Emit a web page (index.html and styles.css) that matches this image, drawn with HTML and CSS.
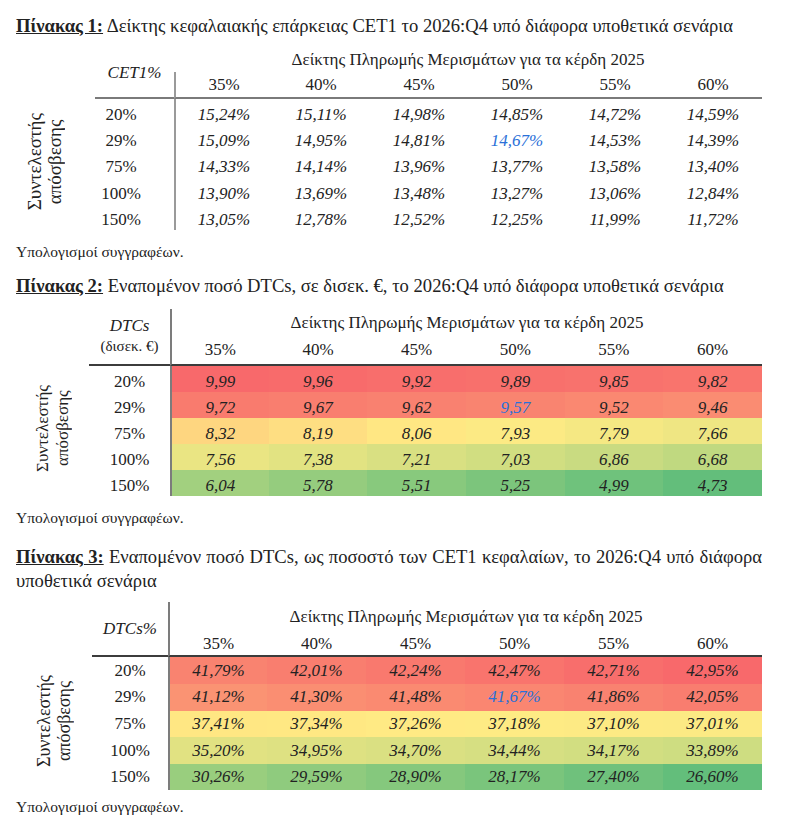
FILE: index.html
```html
<!DOCTYPE html>
<html lang="el">
<head>
<meta charset="utf-8">
<title>Πίνακες DTCs</title>
<link rel="stylesheet" href="styles.css">
</head>
<body>
<section class="block b1">
  <p class="caption"><span class="lbl">Πίνακας 1:</span> Δείκτης κεφαλαιακής επάρκειας CET1 το 2026:Q4 υπό διάφορα υποθετικά σενάρια</p>
  <table class="tbl t1">
    <colgroup><col class="c-rot"><col class="c-lab"><col><col><col><col><col><col></colgroup>
    <tr class="h1"><td></td><td class="corner" rowspan="2"><i>CET1%</i></td><td class="span" colspan="6">Δείκτης Πληρωμής Μερισμάτων για τα κέρδη 2025</td></tr>
    <tr class="h2"><td></td><td class="hd first">35%</td><td class="hd">40%</td><td class="hd">45%</td><td class="hd">50%</td><td class="hd">55%</td><td class="hd">60%</td></tr>
    <tr class="r"><td class="rot" rowspan="5"><div class="rot-txt">Συντελεστής<br>απόσβεσης</div></td><td class="lab">20%</td><td class="v first">15,24%</td><td class="v">15,11%</td><td class="v">14,98%</td><td class="v">14,85%</td><td class="v">14,72%</td><td class="v">14,59%</td></tr>
    <tr class="r"><td class="lab">29%</td><td class="v first">15,09%</td><td class="v">14,95%</td><td class="v">14,81%</td><td class="v hl">14,67%</td><td class="v">14,53%</td><td class="v">14,39%</td></tr>
    <tr class="r"><td class="lab">75%</td><td class="v first">14,33%</td><td class="v">14,14%</td><td class="v">13,96%</td><td class="v">13,77%</td><td class="v">13,58%</td><td class="v">13,40%</td></tr>
    <tr class="r"><td class="lab">100%</td><td class="v first">13,90%</td><td class="v">13,69%</td><td class="v">13,48%</td><td class="v">13,27%</td><td class="v">13,06%</td><td class="v">12,84%</td></tr>
    <tr class="r"><td class="lab">150%</td><td class="v first">13,05%</td><td class="v">12,78%</td><td class="v">12,52%</td><td class="v">12,25%</td><td class="v">11,99%</td><td class="v">11,72%</td></tr>
  </table>
  <p class="note">Υπολογισμοί συγγραφέων.</p>
</section>

<section class="block b2">
  <p class="caption"><span class="lbl">Πίνακας 2:</span> Εναπομένον ποσό DTCs, σε δισεκ. €, το 2026:Q4 υπό διάφορα υποθετικά σενάρια</p>
  <table class="tbl t2 heat">
    <colgroup><col class="c-rot"><col class="c-lab"><col><col><col><col><col><col></colgroup>
    <tr class="h1"><td></td><td class="corner" rowspan="2"><i>DTCs</i><br><span class="unit">(δισεκ. €)</span></td><td class="span first" colspan="6">Δείκτης Πληρωμής Μερισμάτων για τα κέρδη 2025</td></tr>
    <tr class="h2"><td></td><td class="hd first">35%</td><td class="hd">40%</td><td class="hd">45%</td><td class="hd">50%</td><td class="hd">55%</td><td class="hd">60%</td></tr>
    <tr class="r"><td class="rot" rowspan="5"><div class="rot-txt">Συντελεστής<br>απόσβεσης</div></td><td class="lab">20%</td><td class="v first">9,99</td><td class="v">9,96</td><td class="v">9,92</td><td class="v">9,89</td><td class="v">9,85</td><td class="v">9,82</td></tr>
    <tr class="r"><td class="lab">29%</td><td class="v first">9,72</td><td class="v">9,67</td><td class="v">9,62</td><td class="v hl">9,57</td><td class="v">9,52</td><td class="v">9,46</td></tr>
    <tr class="r"><td class="lab">75%</td><td class="v first">8,32</td><td class="v">8,19</td><td class="v">8,06</td><td class="v">7,93</td><td class="v">7,79</td><td class="v">7,66</td></tr>
    <tr class="r"><td class="lab">100%</td><td class="v first">7,56</td><td class="v">7,38</td><td class="v">7,21</td><td class="v">7,03</td><td class="v">6,86</td><td class="v">6,68</td></tr>
    <tr class="r"><td class="lab">150%</td><td class="v first">6,04</td><td class="v">5,78</td><td class="v">5,51</td><td class="v">5,25</td><td class="v">4,99</td><td class="v">4,73</td></tr>
  </table>
  <p class="note">Υπολογισμοί συγγραφέων.</p>
</section>

<section class="block b3">
  <p class="caption justify"><span class="lbl">Πίνακας 3:</span> Εναπομένον ποσό DTCs, ως ποσοστό των CET1 κεφαλαίων, το 2026:Q4 υπό διάφορα υποθετικά σενάρια</p>
  <table class="tbl t3 heat">
    <colgroup><col class="c-rot"><col class="c-lab"><col><col><col><col><col><col></colgroup>
    <tr class="h1"><td></td><td class="corner" rowspan="2"><i>DTCs%</i></td><td class="span first" colspan="6">Δείκτης Πληρωμής Μερισμάτων για τα κέρδη 2025</td></tr>
    <tr class="h2"><td></td><td class="hd first">35%</td><td class="hd">40%</td><td class="hd">45%</td><td class="hd">50%</td><td class="hd">55%</td><td class="hd">60%</td></tr>
    <tr class="r"><td class="rot" rowspan="5"><div class="rot-txt">Συντελεστής<br>απόσβεσης</div></td><td class="lab">20%</td><td class="v first">41,79%</td><td class="v">42,01%</td><td class="v">42,24%</td><td class="v">42,47%</td><td class="v">42,71%</td><td class="v">42,95%</td></tr>
    <tr class="r"><td class="lab">29%</td><td class="v first">41,12%</td><td class="v">41,30%</td><td class="v">41,48%</td><td class="v hl">41,67%</td><td class="v">41,86%</td><td class="v">42,05%</td></tr>
    <tr class="r"><td class="lab">75%</td><td class="v first">37,41%</td><td class="v">37,34%</td><td class="v">37,26%</td><td class="v">37,18%</td><td class="v">37,10%</td><td class="v">37,01%</td></tr>
    <tr class="r"><td class="lab">100%</td><td class="v first">35,20%</td><td class="v">34,95%</td><td class="v">34,70%</td><td class="v">34,44%</td><td class="v">34,17%</td><td class="v">33,89%</td></tr>
    <tr class="r"><td class="lab">150%</td><td class="v first">30,26%</td><td class="v">29,59%</td><td class="v">28,90%</td><td class="v">28,17%</td><td class="v">27,40%</td><td class="v">26,60%</td></tr>
  </table>
  <p class="note">Υπολογισμοί συγγραφέων.</p>
</section>
<script src="script.js"></script>
</body>
</html>
```

FILE: styles.css
```css
html, body {
  margin: 0;
  padding: 0;
  background: #ffffff;
}
body {
  padding: 0 16px;
  font-family: "Liberation Serif", "Times New Roman", "DejaVu Serif", serif;
  color: #222222;
}
.block {
  width: 746px;
}
.b1 { padding-top: 14px; }
.b2 { padding-top: 12px; }
.b3 { padding-top: 17px; }

.caption {
  margin: 0;
  font-size: 18.6px;
  line-height: 24px;
}
.caption.justify { text-align: justify; }
.lbl {
  font-weight: bold;
  text-decoration: underline;
}

.tbl {
  border-collapse: separate;
  border-spacing: 0;
  table-layout: fixed;
  width: 746px;
  font-size: 17px;
  line-height: 20px;
}
.tbl td {
  padding: 0;
  text-align: center;
  vertical-align: middle;
  white-space: nowrap;
}
.t1 { margin-top: 10px; }
.t2 { margin-top: 11px; }
.t3 { margin-top: 9px; }

.t1 .c-rot { width: 79px; }
.t1 .c-lab { width: 79px; }
.t2 .c-rot { width: 73px; }
.t2 .c-lab { width: 81px; }
.t3 .c-rot { width: 76px; }
.t3 .c-lab { width: 76px; }

.t1 .h1 { height: 24px; }
.t1 .h2 { height: 27px; }
.t2 .h1 { height: 28px; }
.t2 .h2 { height: 29px; }
.t3 .h1 { height: 30px; }
.t3 .h2 { height: 25px; }
.t1 .r { height: 26.2px; }
.t2 .r { height: 25.6px; }
.t3 .r { height: 26.6px; }
.t1 .r td, .t2 .r td { padding-top: 6px; }
.t1 .r td.rot, .t2 .r td.rot { padding-top: 0; }

.corner { border-bottom: 2px solid #7a7a7a; }
.h2 .hd { border-bottom: 2px solid #7a7a7a; }
.heat .corner, .heat .h2 .hd { border-bottom-color: #3c3c3c; }
.corner .unit { font-size: 15px; }

.first { border-left: 2px solid #9a9a9a; }
.heat .first { border-left-color: #7c7c7c; }

.t1 .lab { padding-right: 27px; }
.t1 .rot { padding-right: 22px; }

.v { font-style: italic; }
.hl { color: #2a70d8; }

.rot-txt {
  display: inline-block;
  writing-mode: vertical-rl;
  transform: rotate(180deg);
  text-align: center;
  line-height: 20px;
}
.t1 .rot-txt { font-size: 19px; }
.t2 .rot-txt { font-size: 17px; }
.t3 .rot-txt { font-size: 18px; }

.note {
  margin: 0;
  font-size: 15.5px;
  line-height: 20px;
}
.b1 .note { margin-top: 12px; }
.b2 .note { margin-top: 12.5px; }
.b3 .note { margin-top: 7px; }
```

FILE: script.js
```js
(function () {
  var RED = [248, 105, 107], YEL = [255, 235, 132], GRN = [99, 190, 123];
  var tables = document.querySelectorAll('.heat');
  tables.forEach(function (tbl) {
    var cells = Array.prototype.slice.call(tbl.querySelectorAll('.v'));
    var vals = cells.map(function (c) { return parseFloat(c.textContent.replace(',', '.')); });
    var s = vals.slice().sort(function (a, b) { return a - b; });
    var n = s.length;
    var mid = n % 2 ? s[(n - 1) / 2] : (s[n / 2 - 1] + s[n / 2]) / 2;
    var min = s[0], max = s[n - 1];
    cells.forEach(function (c, i) {
      var v = vals[i], to, t;
      if (v >= mid) { to = RED; t = (v - mid) / (max - mid); }
      else { to = GRN; t = (mid - v) / (mid - min); }
      var col = YEL.map(function (x, k) { return Math.round(x + (to[k] - x) * t); });
      c.style.backgroundColor = 'rgb(' + col.join(',') + ')';
    });
  });
})();
```
